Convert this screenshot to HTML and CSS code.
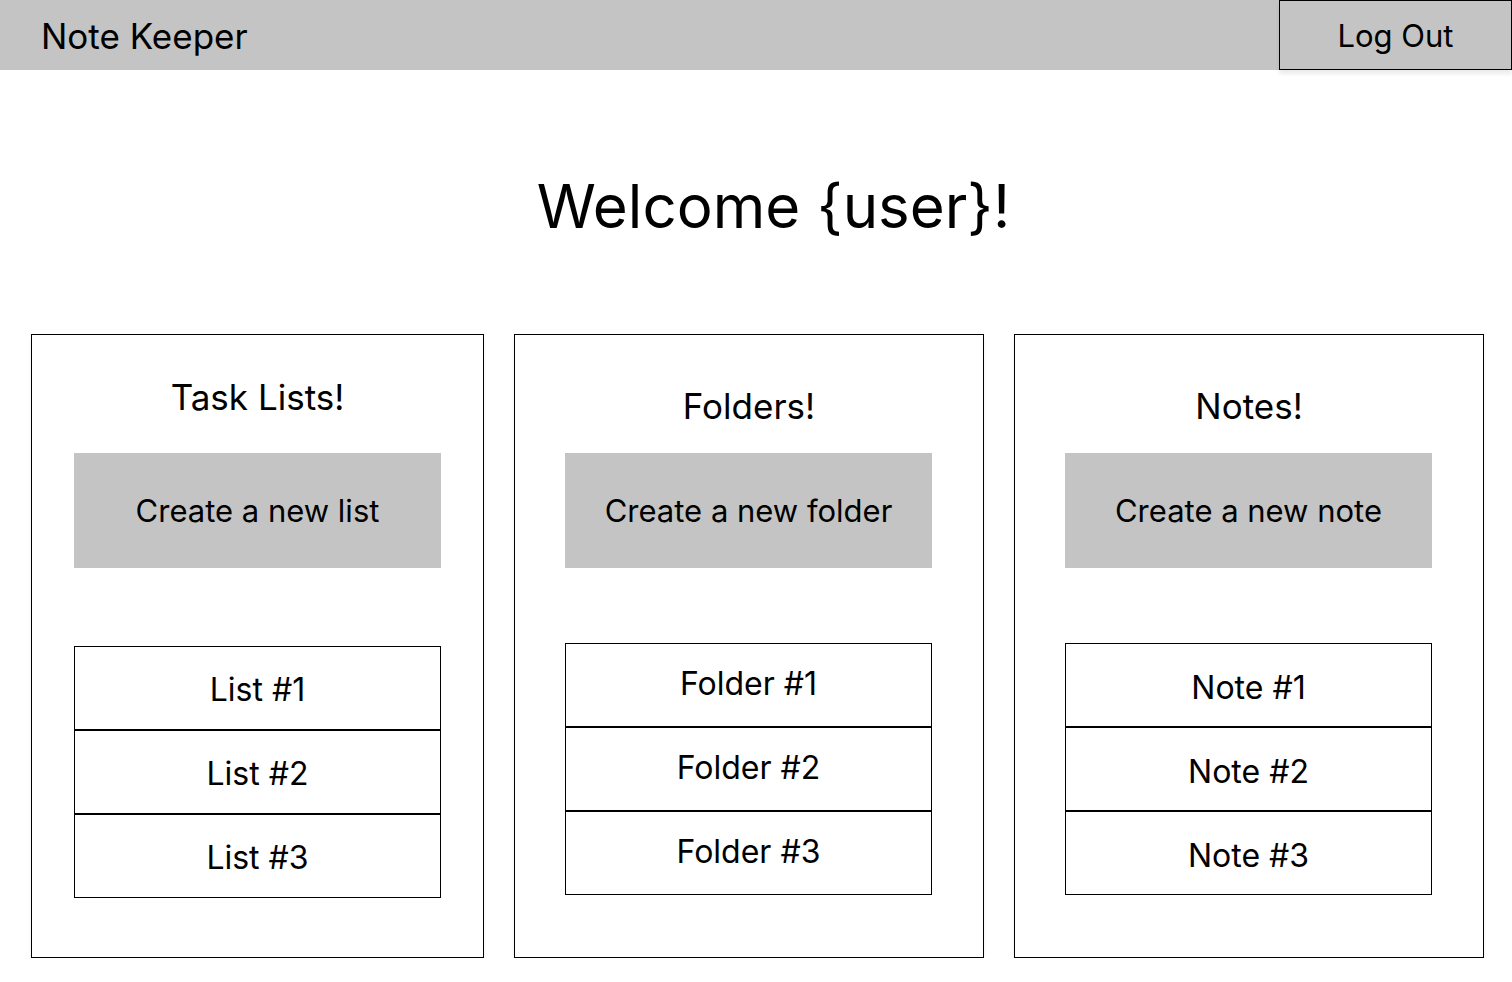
FILE: index.html
```html
<!DOCTYPE html>
<html lang="en">
<head>
<meta charset="utf-8">
<title>Note Keeper</title>
<link rel="stylesheet" href="styles.css">
</head>
<body>
<header class="topbar">
  <div class="brand">Note Keeper</div>
  <button class="logout">Log Out</button>
</header>
<main class="main">
  <h1 class="welcome">Welcome {user}!</h1>
  <section class="cards">
    <div class="card card-narrow card-lists">
      <h2 class="card-title">Task Lists!</h2>
      <button class="create">Create a new list</button>
      <ul class="items">
        <li class="item">List #1</li>
        <li class="item">List #2</li>
        <li class="item">List #3</li>
      </ul>
    </div>
    <div class="card card-folders">
      <h2 class="card-title">Folders!</h2>
      <button class="create">Create a new folder</button>
      <ul class="items">
        <li class="item">Folder #1</li>
        <li class="item">Folder #2</li>
        <li class="item">Folder #3</li>
      </ul>
    </div>
    <div class="card card-notes">
      <h2 class="card-title">Notes!</h2>
      <button class="create">Create a new note</button>
      <ul class="items">
        <li class="item">Note #1</li>
        <li class="item">Note #2</li>
        <li class="item">Note #3</li>
      </ul>
    </div>
  </section>
</main>
</body>
</html>
```

FILE: styles.css
```css
* { box-sizing: border-box; }
html, body {
  margin: 0;
  padding: 0;
  background: #ffffff;
  font-family: Inter, "Noto Sans", sans-serif;
  color: #000;
}
.topbar {
  height: 70px;
  background: #c4c4c4;
  display: flex;
  align-items: center;
  justify-content: space-between;
}
.brand {
  padding-left: 41px;
  padding-top: 2px;
  font-size: 35px;
  line-height: 42px;
}
.logout {
  align-self: stretch;
  width: 233px;
  margin: 0;
  padding: 0;
  background: #c4c4c4;
  border: 1px solid #000;
  box-shadow: 0 4px 4px rgba(0,0,0,0.08);
  font-family: inherit;
  font-size: 31px;
  color: #000;
}
.main {
  display: flex;
  flex-direction: column;
}
.welcome {
  margin: 0;
  padding: 100px 0 0 35px;
  height: 264px;
  text-align: center;
  font-weight: 400;
  font-size: 60px;
  line-height: 73px;
}
.cards {
  display: flex;
  gap: 30px;
  padding-left: 31px;
}
.card {
  width: 470px;
  height: 624px;
  border: 1px solid #000;
  box-shadow: 0 4px 4px rgba(0,0,0,0.06);
  display: flex;
  flex-direction: column;
  align-items: center;
  padding-top: 50px;
}
.card-title {
  margin: 0 0 26px;
  font-weight: 400;
  font-size: 35px;
  line-height: 42px;
}
.create {
  width: 367px;
  height: 115px;
  margin: 0 1px 0 0;
  padding: 0;
  border: none;
  background: #c4c4c4;
  font-family: inherit;
  font-size: 31px;
  color: #000;
}
.items {
  list-style: none;
  margin: 75px 1px 0 0;
  padding: 0;
  width: 367px;
}
.item {
  height: 84px;
  border: 1px solid #000;
  display: flex;
  align-items: center;
  justify-content: center;
  font-size: 32px;
}
.card-narrow {
  width: 453px;
  padding-top: 41px;
}
.card-narrow .card-title {
  margin-bottom: 35px;
}
.card-narrow .create {
  margin-right: 0;
}
.card-narrow .items {
  margin-top: 78px;
  margin-right: 0;
}
.card-lists .item {
  padding-top: 3px;
}
.card-folders .item {
  padding-bottom: 4px;
}
.card-notes .item {
  padding-top: 5px;
}
```
